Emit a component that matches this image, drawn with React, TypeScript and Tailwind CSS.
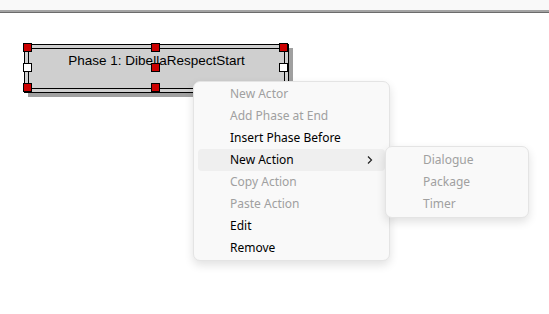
const menuItems = [
  { label: "New Actor", disabled: true },
  { label: "Add Phase at End", disabled: true },
  { label: "Insert Phase Before" },
  { label: "New Action", active: true, submenu: true },
  { label: "Copy Action", disabled: true },
  { label: "Paste Action", disabled: true },
  { label: "Edit" },
  { label: "Remove" },
];

const subItems = ["Dialogue", "Package", "Timer"];

// selection handles: rows top / middle / bottom, cols left / centre / right
const handleRows = [
  ["red", "red", "red"],
  ["white", "red", "white"],
  ["red", "red", "red"],
];

function Handle({ white }: { white?: boolean }) {
  return <div className={`w-[9px] h-[9px] border border-black ${white ? "bg-white" : "bg-[#cc0000]"}`} />;
}

function PhaseNode() {
  return (
    <div className="absolute left-[23px] top-[43px] w-[266px] h-[50px]">
      <div className="absolute left-[1px] top-[1px] right-0 bottom-0">
        {/* drop shadow */}
        <div className="absolute left-[4px] top-[4px] w-full h-full bg-[#a0a0a0]" />
        <div className="relative w-full h-full border border-black bg-[#cfcfcf] p-[3px]">
          <div className="w-full h-full border border-black bg-[#cfcfcf] flex justify-center pt-[4px]">
            <span className="font-['Liberation_Sans',Arial,sans-serif] text-[13.5px] leading-[16px] text-black">
              Phase 1: DibellaRespectStart
            </span>
          </div>
        </div>
      </div>
      {/* handles overlay */}
      <div className="absolute left-0 top-0 w-[265px] h-[49px] flex flex-col justify-between">
        {handleRows.map((row, i) => (
          <div key={i} className="flex justify-between">
            {row.map((c, j) => (
              <Handle key={j} white={c === "white"} />
            ))}
          </div>
        ))}
      </div>
    </div>
  );
}

export default function App() {
  return (
    <div className="w-[549px] h-[314px] bg-white relative overflow-hidden font-['Noto_Sans','Open_Sans',sans-serif]">
      <div className="h-[10px] bg-[#f9f9f9]" />
      <div className="h-[2px] bg-[#a3a3a3]" />
      <div className="h-[1px] bg-[#6b6b6b]" />

      <PhaseNode />

      {/* context menu */}
      <div className="absolute left-[193px] top-[81px] flex items-start">
        <div className="w-[197px] rounded-[7px] border border-[#e4e4e4] bg-[#f9f9f9] px-[4px] py-[1px] shadow-[0_4px_10px_rgba(0,0,0,0.12)]">
          {menuItems.map((item) => (
            <div
              key={item.label}
              className={`h-[22px] flex items-center pl-[32px] pr-[10px] rounded-[4px] text-[12px] ${
                item.active ? "bg-[#efefef]" : ""
              } ${item.disabled ? "text-[#a0a0a0]" : "text-black"}`}
            >
              <span className="flex-1">{item.label}</span>
              {item.submenu && (
                <svg width="8" height="10" viewBox="0 0 8 10" className="mr-[1px]">
                  <path d="M2 1.5 L5.5 5 L2 8.5" fill="none" stroke="#222" strokeWidth="1.2" />
                </svg>
              )}
            </div>
          ))}
        </div>

        {/* submenu */}
        <div className="-ml-[5px] mt-[65px] w-[144px] rounded-[7px] border border-[#e4e4e4] bg-[#f9f9f9] px-[4px] py-[2px] shadow-[0_4px_10px_rgba(0,0,0,0.12)]">
          {subItems.map((s) => (
            <div key={s} className="h-[22px] flex items-center pl-[33px] text-[12px] text-[#a0a0a0]">
              {s}
            </div>
          ))}
        </div>
      </div>
    </div>
  );
}
